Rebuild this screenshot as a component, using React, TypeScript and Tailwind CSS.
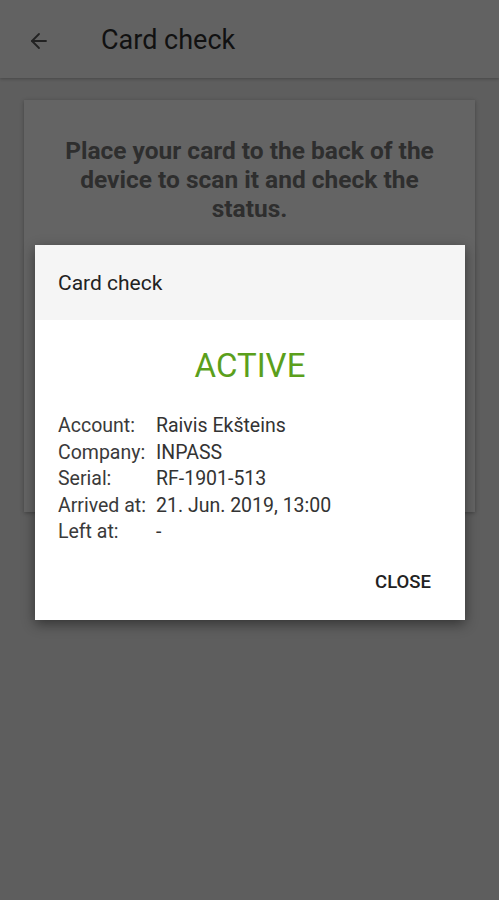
import { ArrowLeft } from "lucide-react";

const rows = [
  { label: "Account:", value: "Raivis Ekšteins" },
  { label: "Company:", value: "INPASS" },
  { label: "Serial:", value: "RF-1901-513" },
  { label: "Arrived at:", value: "21. Jun. 2019, 13:00" },
  { label: "Left at:", value: "-" },
];

export default function App() {
  return (
    <div
      className="relative w-[499px] h-[900px] bg-[#5e5e5e] overflow-hidden"
      style={{ fontFamily: "Roboto, 'Noto Sans', sans-serif" }}
    >
      {/* app bar */}
      <div className="h-[78px] bg-[#626262] flex items-center pt-[3px] shadow-[0_1px_3px_rgba(0,0,0,0.25)]">
        <ArrowLeft className="ml-[27px] w-6 h-6 text-[#222]" strokeWidth={1.8} />
        <h1 className="ml-[50px] text-[27px] text-[#111]">Card check</h1>
      </div>

      {/* card behind the dialog */}
      <div className="mx-6 mt-[22px] h-[412px] bg-[#646464] shadow-[0_1px_4px_rgba(0,0,0,0.3)] pt-[36px]">
        <p className="px-7 text-center text-[24.5px] leading-[29px] font-bold text-[#2e2e2e]">
          Place your card to the back of the device to scan it and check the status.
        </p>
      </div>

      {/* dialog */}
      <div className="absolute left-[35px] top-[245px] w-[430px] h-[375px] bg-white shadow-[0_4px_12px_rgba(0,0,0,0.45)] flex flex-col">
        <div className="h-[75px] bg-[#f5f5f5] flex items-center px-[23px] pt-[2px]">
          <span className="text-[21px] text-[#222]">Card check</span>
        </div>
        <div className="pt-[25px] text-center text-[33px] leading-[42px] text-[#5b9f1c]">ACTIVE</div>
        <div className="mt-[26px] px-[23px] flex flex-col">
          {rows.map((r) => (
            <div key={r.label} className="flex text-[19.5px] leading-[26.5px] text-[#333]">
              <span className="w-[98px] shrink-0 text-[#3a3a3a]">{r.label}</span>
              <span>{r.value}</span>
            </div>
          ))}
        </div>
        <div className="mt-auto mb-[23px] flex justify-end pr-[34px]">
          <span className="text-[18.5px] font-medium text-[#222]">CLOSE</span>
        </div>
      </div>
    </div>
  );
}
